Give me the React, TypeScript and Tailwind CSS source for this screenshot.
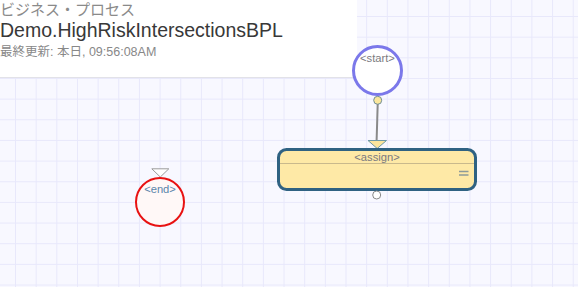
export default function App() {
  return (
    <div className="relative w-[578px] h-[287px] overflow-hidden bg-[#f8f8ff] bg-[linear-gradient(to_right,#e8e8fb_1px,transparent_1px),linear-gradient(to_bottom,#e8e8fb_1px,transparent_1px)] bg-[size:20.67px_20.67px] bg-[position:15px_16px] font-['Liberation_Sans','Noto_Sans_CJK_JP',sans-serif]">
      {/* header panel */}
      <div className="w-[357px] h-[78px] bg-white border-b border-[#e2e2e8] flex flex-col">
        <div className="text-[15px] leading-[20px] text-[#8a8a8a]">ビジネス・プロセス</div>
        <div className="text-[19.5px] leading-[20px] text-[#383838]">Demo.HighRiskIntersectionsBPL</div>
        <div className="mt-[5px] text-[12.5px] leading-[14px] text-[#888]">最終更新: 本日, 09:56:08AM</div>
      </div>

      {/* diagram */}
      <svg className="absolute inset-0" width="578" height="287" viewBox="0 0 578 287">
        {/* start */}
        <circle cx="377.5" cy="70.5" r="24" fill="#fff" stroke="#7b78ea" strokeWidth="3" />
        <text x="377.5" y="62" textAnchor="middle" fontSize="11.2" fill="#7a7a80" fontFamily="Liberation Sans, sans-serif">&lt;start&gt;</text>
        <line x1="377.7" y1="104" x2="376.6" y2="141" stroke="#8a8a8a" strokeWidth="2" />
        <circle cx="377.7" cy="100.3" r="4" fill="#fbe79c" stroke="#6f8d96" strokeWidth="1" />

        {/* assign */}
        <polygon points="368,140.5 386.5,140.5 377.2,148.5" fill="#fbe59c" stroke="#6c98a6" strokeWidth="1" />
        <rect x="278.5" y="149.5" width="197" height="40" rx="8" fill="#fee9a6" stroke="#2f6282" strokeWidth="3" />
        <line x1="280" y1="163.5" x2="474" y2="163.5" stroke="#c9b98c" strokeWidth="1" />
        <text x="377" y="161" textAnchor="middle" fontSize="11.2" fill="#7a7a80" fontFamily="Liberation Sans, sans-serif">&lt;assign&gt;</text>
        <line x1="459" y1="171.5" x2="468.5" y2="171.5" stroke="#8d9a98" strokeWidth="1.5" />
        <line x1="459" y1="175" x2="468.5" y2="175" stroke="#8d9a98" strokeWidth="1.5" />
        <circle cx="376.7" cy="195" r="4" fill="#fff" stroke="#8a8a8a" strokeWidth="1" />

        {/* end */}
        <polygon points="151.8,168.8 168.8,168.8 160.3,177" fill="#fff" stroke="#9a9a9a" strokeWidth="1" />
        <circle cx="160" cy="202" r="24" fill="#fff8f7" stroke="#e81212" strokeWidth="2" />
        <text x="160" y="193" textAnchor="middle" fontSize="11.2" fill="#5b86aa" fontFamily="Liberation Sans, sans-serif">&lt;end&gt;</text>
      </svg>
    </div>
  );
}
